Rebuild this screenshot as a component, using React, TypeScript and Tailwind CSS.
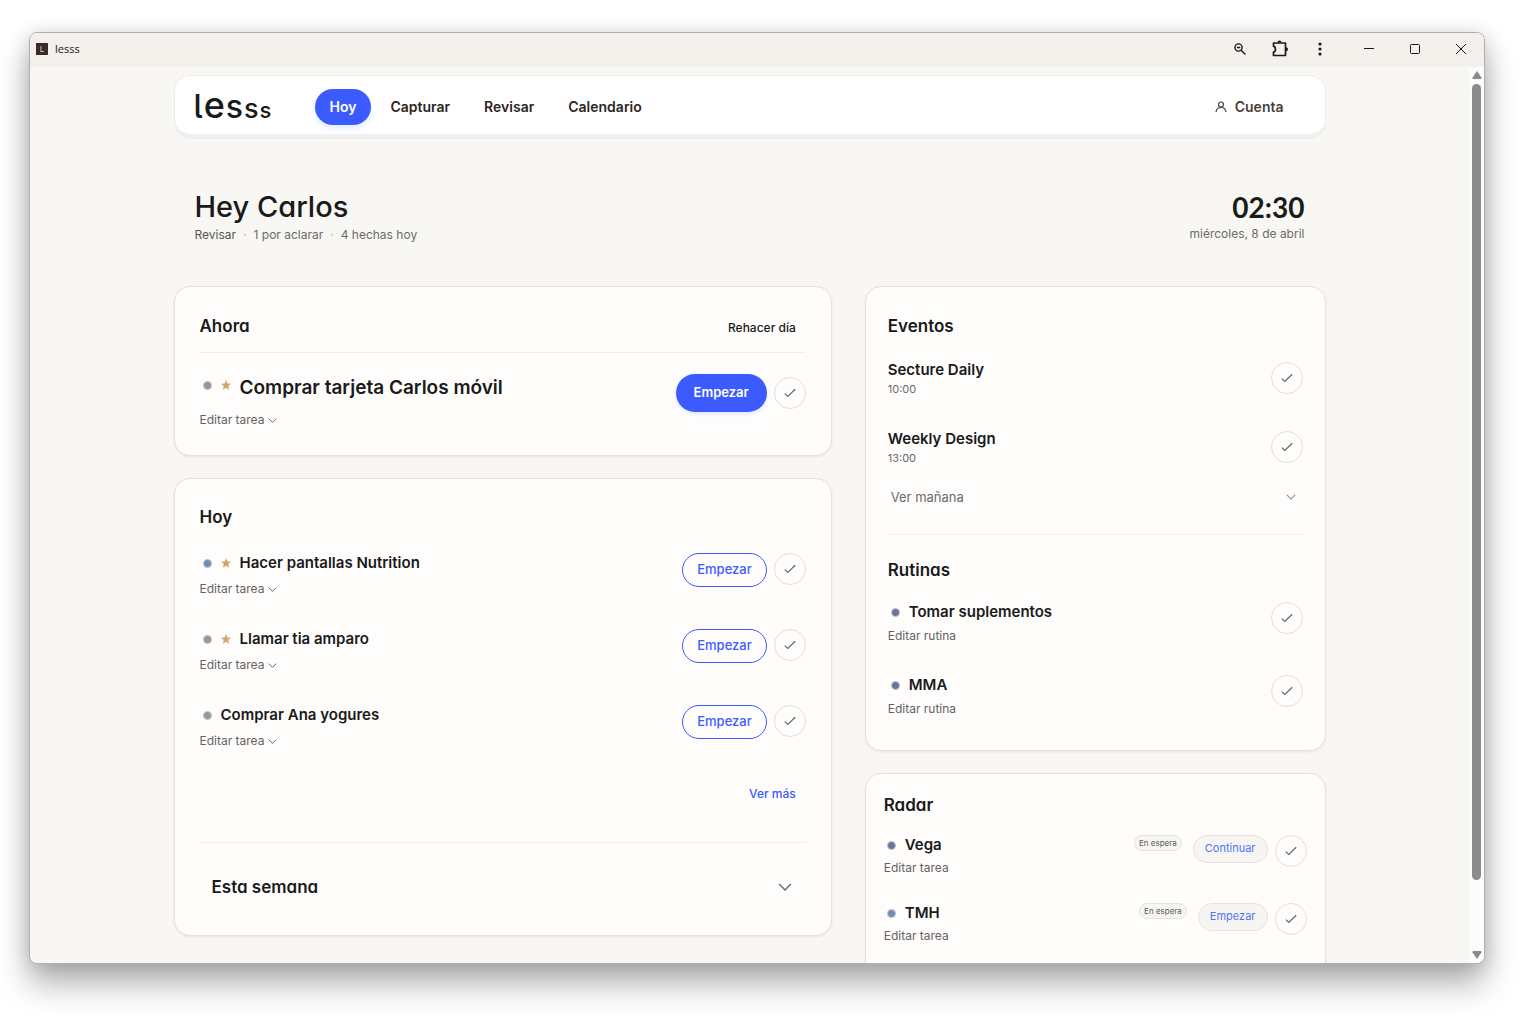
type Task = {
  title: string
  dot: string
  star?: boolean
}

const todayTasks: Task[] = [
  { title: 'Hacer pantallas Nutrition', dot: 'bg-[#6f8bb8]', star: true },
  { title: 'Llamar tia amparo', dot: 'bg-[#969696]', star: true },
  { title: 'Comprar Ana yogures', dot: 'bg-[#969696]' },
]

const events = [
  { title: 'Secture Daily', time: '10:00' },
  { title: 'Weekly Design', time: '13:00' },
]

const routines = ['Tomar suplementos', 'MMA']

const radar = [
  { title: 'Vega', dot: 'bg-[#66779b]', action: 'Continuar' },
  { title: 'TMH', dot: 'bg-[#6f8bb8]', action: 'Empezar' },
]

const navLinks = ['Capturar', 'Revisar', 'Calendario']

const card = 'rounded-2xl border border-[#e5e3dd] bg-[#fefdfc] shadow-[0_1px_3px_rgba(0,0,0,0.07)]'
const heading = "font-semibold text-[17px] leading-6 text-[#1a1a1a] [font-feature-settings:'cv11']"

function Dot({ color }: { color: string }) {
  return <span className={`size-[9px] shrink-0 rounded-full border border-[#c4c4c4] ${color}`} />
}

function Star() {
  return (
    <svg viewBox="0 0 24 24" className="size-2.5 shrink-0" fill="#d3a56c" aria-hidden="true">
      <path d="M12 0l3.300 8.200 8.700.7-6.600 5.700 2 8.600L12 18.600l-7.400 4.600 2-8.600L0 8.900l8.700-.7z" />
    </svg>
  )
}

function Chevron({ className }: { className: string }) {
  return (
    <svg viewBox="0 0 12 12" className={className} fill="none" stroke="currentColor" strokeWidth="1.300" aria-hidden="true">
      <path d="M1 3.500l5 5 5-5" />
    </svg>
  )
}

function DoneButton({ label }: { label: string }) {
  return (
    <button aria-label={label} className="flex size-8 shrink-0 items-center justify-center rounded-full border border-[#e0dfdb] text-[#666]">
      <svg viewBox="0 0 12 12" className="size-3" fill="none" stroke="currentColor" strokeWidth="1.200" aria-hidden="true">
        <path d="M.8 6.600l3 2.900L11.200 2.200" />
      </svg>
    </button>
  )
}

function EditTask() {
  return (
    <button className="flex items-center gap-1 text-[12px] leading-5 text-[#636363]">
      Editar tarea
      <Chevron className="size-[9px]" />
    </button>
  )
}

function TitleBar() {
  return (
    <header className="flex h-[34px] shrink-0 items-center bg-[#f4f0ec] pb-0.5 pl-1.5 text-[#1a1a1a]">
      <span className="flex size-3 items-center justify-center bg-[#3b2a2a] text-[8px] leading-none text-[#e8d5c8]">L</span>
      <span className="ml-[7px] font-['Open_Sans',sans-serif] text-[11px]">lesss</span>
      <div className="ml-auto flex items-center">
        <button aria-label="Zoom" className="flex w-10 justify-center">
          <svg viewBox="0 0 12 12" className="size-3" fill="none" stroke="currentColor" strokeWidth="1.400">
            <circle cx="4.500" cy="4.500" r="3.600" />
            <path d="M7.200 7.200l4.200 4.200M2.800 4.500h3.400" />
          </svg>
        </button>
        <button aria-label="Extensiones" className="flex w-10 justify-center">
          <svg viewBox="0 0 18 18" className="size-[18px]" fill="none" stroke="currentColor" strokeWidth="1.700">
            <path d="M2.500 3h12v12.500h-12v-3.300c2.600-.6 2.600-5.400 0-6z" strokeLinejoin="round" />
            <path d="M6.500 2.500a2 2 0 0 1 4 0zM15 7.200a2 2 0 0 1 0 4z" fill="currentColor" stroke="none" />
          </svg>
        </button>
        <button aria-label="Menú" className="flex w-10 justify-center">
          <svg viewBox="0 0 4 14" className="h-3.5 w-1" fill="currentColor">
            <circle cx="2" cy="2" r="1.600" />
            <circle cx="2" cy="7" r="1.600" />
            <circle cx="2" cy="12" r="1.600" />
          </svg>
        </button>
        <div className="ml-1.5 flex">
          <button aria-label="Minimizar" className="flex w-[46px] justify-center">
            <svg viewBox="0 0 12 12" className="size-3" fill="none" stroke="currentColor"><path d="M1 5.500h10" /></svg>
          </button>
          <button aria-label="Maximizar" className="flex w-[46px] justify-center">
            <svg viewBox="0 0 12 12" className="size-3" fill="none" stroke="currentColor"><rect x="1.500" y="1.500" width="9" height="9" rx="1" /></svg>
          </button>
          <button aria-label="Cerrar" className="flex w-[46px] justify-center">
            <svg viewBox="0 0 12 12" className="size-3" fill="none" stroke="currentColor"><path d="M1 1l10 10M11 1L1 11" /></svg>
          </button>
        </div>
      </div>
    </header>
  )
}

function NavBar() {
  return (
    <nav className="flex h-16 items-center rounded-2xl border border-[#ececec] bg-white pr-[41px] pl-[19px] text-sm font-semibold text-[#2c2523] shadow-[inset_0_-4px_0_#f0f0f0]">
      <a href="#" className="flex w-[121px] items-baseline gap-px leading-8 text-[#1a1a1a] [font-feature-settings:'cv05']">
        <span className="text-[32px] font-medium">l</span>
        <span className="text-[36px] font-medium">e</span>
        <span className="text-[32px] font-medium">s</span>
        <span className="text-[27px] font-medium">s</span>
        <span className="text-[22px] font-medium">s</span>
      </a>
      <a href="#" className="rounded-full bg-[#3b5bff] px-[15px] py-2 text-white shadow-[0_3px_6px_rgba(80,160,255,0.2)]">Hoy</a>
      <div className="ml-[19px] flex gap-[34px]">
        {navLinks.map((link) => (
          <a key={link} href="#">{link}</a>
        ))}
      </div>
      <a href="#" className="ml-auto flex items-center gap-2 text-[#4a3f3d]">
        <svg viewBox="0 0 12 12" className="size-3" fill="none" stroke="currentColor" strokeWidth="1.200" aria-hidden="true">
          <circle cx="6" cy="3.500" r="2.500" />
          <path d="M1 11c.4-3 2.300-4.500 5-4.500s4.600 1.500 5 4.500" />
        </svg>
        Cuenta
      </a>
    </nav>
  )
}

function Greeting() {
  return (
    <section className="flex justify-between px-[21px] pt-[50px] pb-[41px]">
      <div>
        <h1 className="text-[29px] leading-9 font-medium text-[#1a1a1a] [font-feature-settings:'cv11']">Hey Carlos</h1>
        <p className="flex gap-[7px] text-[12px] leading-5 text-[#6b6b6b]">
          <a href="#" className="text-[#555]">Revisar</a>
          <span className="text-[#aaa]">·</span>
          <span>1 por aclarar</span>
          <span className="text-[#aaa]">·</span>
          <span>4 hechas hoy</span>
        </p>
      </div>
      <div className="text-right">
        <p className="font-[Lato,sans-serif] text-[28px] leading-9 font-bold text-[#1a1a1a]">02:30</p>
        <p className="text-[12px] leading-[18px] text-[#6b6b6b]">miércoles, 8 de abril</p>
      </div>
    </section>
  )
}

function NowCard() {
  return (
    <section className={`${card} px-[25px] pt-[27px] pb-[25px]`}>
      <div className="flex justify-between border-b border-[#efeeea] pb-3.5">
        <h2 className={heading}>Ahora</h2>
        <button className="mr-2.5 pt-1 text-[12px] leading-5 font-medium text-[#1a1a1a]">Rehacer día</button>
      </div>
      <div className="mt-[21px] flex items-start justify-between">
        <div>
          <div className="flex items-center gap-[9px] pl-[3px]">
            <div className="flex items-center gap-[9px] pb-1.5">
              <Dot color="bg-[#969696]" />
              <Star />
            </div>
            <h3 className="text-[19px] leading-7 font-semibold text-[#1a1a1a]">Comprar tarjeta Carlos móvil</h3>
          </div>
          <div className="mt-2">
            <EditTask />
          </div>
        </div>
        <div className="flex items-center gap-[7px]">
          <button className="h-[38px] rounded-full bg-[#3b5bff] px-[18px] text-[13px] font-semibold text-white shadow-[0_2px_4px_rgba(80,160,255,0.2)]">Empezar</button>
          <DoneButton label="Completar Comprar tarjeta Carlos móvil" />
        </div>
      </div>
    </section>
  )
}

function TodayCard() {
  return (
    <section className={`${card} px-[25px] pt-[26px] pb-9`}>
      <h2 className={heading}>Hoy</h2>
      <ul className="mt-[22px] flex flex-col gap-7">
        {todayTasks.map((task) => (
          <li key={task.title} className="flex items-start justify-between">
            <div>
              <div className="flex items-center gap-[9px] pl-[3px]">
                <Dot color={task.dot} />
                {task.star && <Star />}
                <h3 className="text-[15px] leading-6 font-semibold text-[#1a1a1a]">{task.title}</h3>
              </div>
              <div className="mt-1">
                <EditTask />
              </div>
            </div>
            <div className="flex gap-[7px] pt-0.5">
              <button className="h-[34px] rounded-full border border-[#3b5bff] px-3.5 text-[13px] font-medium text-[#3b5bff]">Empezar</button>
              <DoneButton label={`Completar ${task.title}`} />
            </div>
          </li>
        ))}
      </ul>
      <div className="mt-[33px] flex justify-end border-b border-[#efeeea] pr-2.5 pb-[38px]">
        <button className="text-[12px] leading-5 font-medium text-[#3b5bff]">Ver más</button>
      </div>
      <button className="mt-8 flex w-full items-center justify-between pr-3.5 pl-3">
        <span className={heading}>Esta semana</span>
        <Chevron className="size-3.5 text-[#6b6b6b]" />
      </button>
    </section>
  )
}

function AgendaCard() {
  return (
    <section className={`${card} px-[22px] pt-[27px] pb-[31px]`}>
      <h2 className={heading}>Eventos</h2>
      <ul className="mt-[21px] flex flex-col gap-[31px]">
        {events.map((event) => (
          <li key={event.title} className="flex items-start justify-between">
            <div>
              <h3 className="text-[15px] leading-[22px] font-semibold text-[#1a1a1a]">{event.title}</h3>
              <p className="text-[11px] leading-4 text-[#6b6b6b]">{event.time}</p>
            </div>
            <div className="pt-[3px]">
              <DoneButton label={`Completar ${event.title}`} />
            </div>
          </li>
        ))}
      </ul>
      <button className="mt-[21px] flex w-full items-center justify-between pr-[7px] pl-[3px] text-[13px] leading-5 text-[#6b6b6b]">
        Ver mañana
        <Chevron className="size-2.5 text-[#8c8c8c]" />
      </button>
      <h2 className={`${heading} mt-[27px] border-t border-[#efeeea] pt-[23px]`}>Rutinas</h2>
      <ul className="mt-[18px] flex flex-col gap-[27px]">
        {routines.map((routine) => (
          <li key={routine} className="flex items-start justify-between">
            <div>
              <div className="flex items-center gap-[9px] pl-[3px]">
                <Dot color="bg-[#66779b]" />
                <h3 className="text-[15px] leading-6 font-semibold text-[#1a1a1a]">{routine}</h3>
              </div>
              <button className="mt-0.5 block text-[12px] leading-5 text-[#636363]">Editar rutina</button>
            </div>
            <div className="pt-0.5">
              <DoneButton label={`Completar ${routine}`} />
            </div>
          </li>
        ))}
      </ul>
    </section>
  )
}

function RadarCard() {
  return (
    <section className={`${card} px-[18px] pt-[19px] pb-11`}>
      <h2 className={heading}>Radar</h2>
      <ul className="mt-4 flex flex-col gap-[22px]">
        {radar.map((item) => (
          <li key={item.title} className="flex items-start justify-between">
            <div>
              <div className="flex items-center gap-[9px] pl-[3px]">
                <Dot color={item.dot} />
                <h3 className="text-[15px] leading-6 font-semibold text-[#1a1a1a]">{item.title}</h3>
              </div>
              <button className="block text-[12px] leading-[22px] text-[#636363]">Editar tarea</button>
            </div>
            <div className="flex items-start pt-0.5">
              <span className="rounded-full border border-[#e5e3dd] bg-[#f6f5f2] px-1 text-[8px] leading-[14px] text-[#5c5c5c]">En espera</span>
              <button className="ml-[11px] rounded-full border border-[#e5e3dd] bg-[#f6f5f2] px-[11px] pb-0.5 text-[11px] leading-6 text-[#4f74f5]">{item.action}</button>
              <div className="ml-[7px]">
                <DoneButton label={`Completar ${item.title}`} />
              </div>
            </div>
          </li>
        ))}
      </ul>
    </section>
  )
}

export default function App() {
  return (
    <div className="flex h-screen bg-white pt-8 pr-[52px] pb-[65px] pl-[29px] font-[Inter,sans-serif]">
      <div className="flex min-w-0 flex-1 flex-col overflow-hidden rounded-lg border border-[#b0b0b0] bg-[#f8f7f4] shadow-[0_20px_32px_rgba(0,0,0,0.3),0_2px_20px_rgba(0,0,0,0.15)]">
        <TitleBar />
        <div className="flex min-h-0 flex-1">
          <main className="min-w-0 flex-1 overflow-hidden pt-2">
            <div className="mx-auto max-w-6xl">
              <NavBar />
              <Greeting />
              <div className="grid grid-cols-[10fr_7fr] items-start gap-[33px]">
                <div className="flex flex-col gap-[22px]">
                  <NowCard />
                  <TodayCard />
                </div>
                <div className="flex flex-col gap-[22px]">
                  <AgendaCard />
                  <RadarCard />
                </div>
              </div>
            </div>
          </main>
          {/* Scrollbar */}
          <div className="flex w-[15px] shrink-0 flex-col items-center bg-[#fcfcfc] py-1 text-[#8b8b8b]">
            <svg viewBox="0 0 10 8" className="h-2 w-2.5" fill="currentColor"><path d="M5 0l4.500 6.500q.4 1.500-1 1.500h-7q-1.400 0-1-1.500z" /></svg>
            <div className="mt-[5px] mb-[71px] w-[9px] flex-1 rounded-full bg-[#8b8b8b]" />
            <svg viewBox="0 0 10 8" className="h-2 w-2.5" fill="currentColor"><path d="M5 8L.5 1.500Q.100 0 1.500 0h7q1.400 0 1 1.500z" /></svg>
          </div>
        </div>
      </div>
    </div>
  )
}
